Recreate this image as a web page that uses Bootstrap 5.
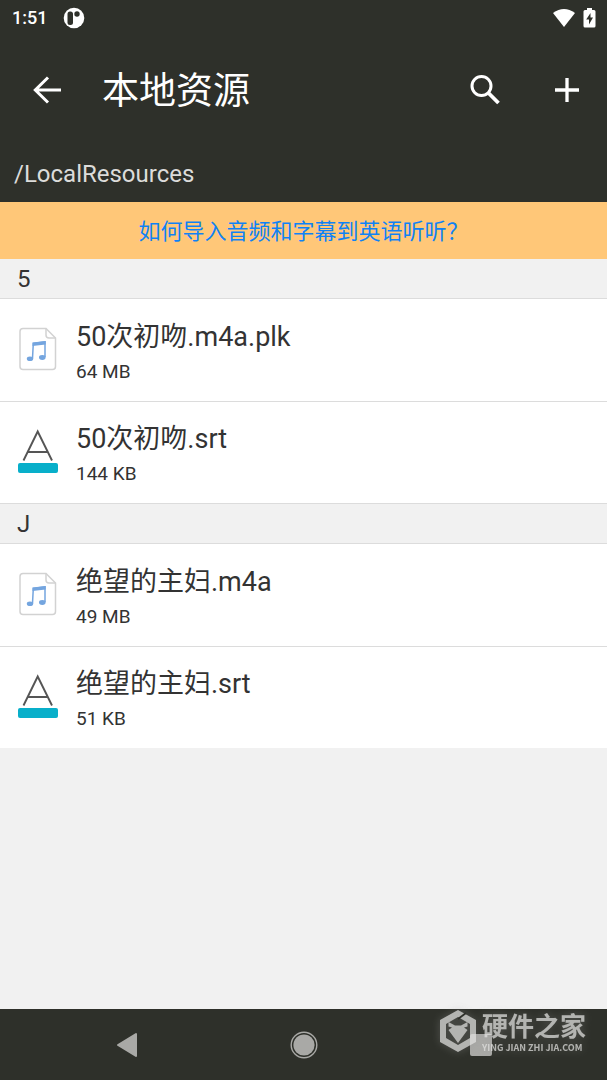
<!DOCTYPE html>
<html lang="zh-CN">
<head>
<meta charset="utf-8">
<meta name="viewport" content="width=device-width, initial-scale=1">
<title>本地资源</title>
<link href="https://cdn.jsdelivr.net/npm/bootstrap@5.3.0/dist/css/bootstrap.min.css" rel="stylesheet">
<style>
  :root { --dark: #2e302a; --page: #f1f1f1; --line: #dcdcdc; }
  body { font-family: Roboto, "Noto Sans CJK SC", sans-serif; background: var(--page); color: #333; }
  svg { display: block; flex: none; }
  .dark-area { background: var(--dark); color: #fff; }
  .status-bar { height: 36px; padding: 0 11px 0 12px; font-size: 18px; font-weight: 500; line-height: 38px; }
  .app-bar { height: 108px; padding: 0 17px 0 24px; }
  .app-bar h1 { font-size: 37px; line-height: 48px; font-weight: 400; margin: 0 0 0 32px; padding-top: 4px; }
  .icon-btn { width: 46px; height: 48px; padding: 0; border: 0; color: #fff; display: flex; align-items: center; justify-content: center; }
  .bar-actions { gap: 36px; }
  .path-bar { height: 58px; line-height: 60px; padding: 0 14px; font-size: 24px; color: #dcdcda; }
  .help-bar { line-height: 57px; padding-top: 1px; height: 57px; background: #ffc778; font-size: 22px; }
  .help-bar a { color: #0f82f5; text-decoration: none; }
  .group-title { font-size: 24px; line-height: 37px; padding: 2px 17px 0; margin: 0; font-weight: 400; background: var(--page); border-bottom: 1px solid var(--line); }
  .files + .group-title { border-top: 1px solid var(--line); }
  .file-item { height: 102px; padding: 0 17px 2px; gap: 17px; border: 0; background: #fff; color: #333; text-decoration: none; }
  .file-item + .file-item { border-top: 1px solid var(--line); }
  .file-text { padding-top: 7px; }
  .file-name { font-size: 27px; line-height: 38px; }
  .file-size { font-size: 19px; line-height: 32px; }
  .nav-keys { height: 71px; position: relative; }
  .key { flex: 1 1 0; height: 71px; border: 0; padding: 0; background: none; display: flex; align-items: center; justify-content: center; color: #a9a9a6; }
  .keys-row { padding: 0 38px; }
  .watermark { position: absolute; right: 21px; top: 0; gap: 5px; color: #e0e0de; opacity: .75; filter: drop-shadow(0 0 4px rgba(150,150,150,.5)); }
  .wm-name { font-size: 26px; line-height: 32px; font-weight: 700; padding-top: 2px; }
  .wm-site { font-family: "Noto Sans CJK SC", sans-serif; font-size: 9px; line-height: 10px; font-weight: 700; }
</style>
</head>
<body class="min-vh-100 d-flex flex-column">
<header class="dark-area">
  <div class="status-bar d-flex align-items-center">
    <span>1:51</span>
    <svg class="ms-3" width="22" height="22" viewBox="0 0 22 22"><circle cx="11" cy="11" r="10.3" fill="#fff"/><rect x="4.500" y="4.500" width="5.500" height="13.500" rx="2.500" fill="#2e302a"/><circle cx="14" cy="7" r="2.700" fill="#2e302a"/></svg>
    <svg class="ms-auto" width="22" height="20" viewBox="0 0 22 20"><path d="M0 5Q11-3 22 5L11 19z" fill="#fff"/></svg>
    <svg class="ms-2" width="13" height="20" viewBox="0 0 13 20"><path d="M4 0h5v2h2q1.500 0 1.500 1.500V18q0 1.500-1.500 1.500H2Q.5 19.500.5 18V3.500Q.5 2 2 2h2z" fill="#fff"/><path d="M7.500 5L3.200 11.500H6v5l4-7H7.500z" fill="#2e302a"/></svg>
  </div>
  <div class="app-bar d-flex align-items-center">
    <button class="btn icon-btn" type="button" aria-label="返回"><svg width="28" height="28" viewBox="0 0 28 28" fill="none" stroke="currentColor" stroke-width="3"><path d="M28 14H2.500M15 1.500L2.300 14 15 26.500"/></svg></button>
    <h1>本地资源</h1>
    <div class="bar-actions d-flex ms-auto">
      <button class="btn icon-btn" type="button" aria-label="搜索"><svg width="30" height="30" viewBox="0 0 30 30" fill="none" stroke="currentColor"><circle cx="11.500" cy="11" r="9.500" stroke-width="3"/><path d="M18.500 18L28.500 28" stroke-width="3.800"/></svg></button>
      <button class="btn icon-btn" type="button" aria-label="添加"><svg width="24" height="24" viewBox="0 0 24 24" stroke="currentColor" stroke-width="3.300"><path d="M12 0v24M0 12h24"/></svg></button>
    </div>
  </div>
  <div class="path-bar">/LocalResources</div>
</header>

<div class="help-bar text-center"><a href="#help">如何导入音频和字幕到英语听听？</a></div>

<main class="flex-grow-1">
  <svg class="d-none" aria-hidden="true">
    <symbol id="audio" viewBox="0 0 42 46">
      <path d="M6 2.500H29L38.500 12V40.500Q38.500 43.500 35.500 43.500H6Q3 43.500 3 40.500V5.500Q3 2.500 6 2.500z" fill="#fff" stroke="#d2d2d2" stroke-width="1.500"/>
      <path d="M29 2.500V9Q29 12 32 12H38.500" fill="none" stroke="#d2d2d2" stroke-width="1.500"/>
      <path d="M15.500 32.500L16.300 17.500L28 15.800V31" fill="none" stroke="#74a5df" stroke-width="1.500"/><path d="M15.500 16.500L28.700 15V18.500L15.500 20z" fill="#74a5df"/>
      <ellipse cx="13" cy="32.800" rx="3.200" ry="2.300" fill="#74a5df"/><ellipse cx="25.300" cy="31.500" rx="3.300" ry="2.400" fill="#74a5df"/>
    </symbol>
    <symbol id="subtitle" viewBox="0 0 42 46">
      <path d="M6.500 31.500L20.700 2.500L35 31.500M11 23H31" fill="none" stroke="#555" stroke-width="1.900"/>
      <rect x="1" y="34" width="40" height="10" rx="2" fill="#08afca"/>
    </symbol>
  </svg>

  <h2 class="group-title">5</h2>
  <div class="files list-group list-group-flush">
    <a href="#f1" class="file-item d-flex align-items-center">
      <svg width="42" height="46"><use href="#audio"/></svg>
      <div class="file-text"><div class="file-name">50次初吻.m4a.plk</div><div class="file-size">64 MB</div></div>
    </a>
    <a href="#f2" class="file-item d-flex align-items-center">
      <svg width="42" height="46"><use href="#subtitle"/></svg>
      <div class="file-text"><div class="file-name">50次初吻.srt</div><div class="file-size">144 KB</div></div>
    </a>
  </div>
  <h2 class="group-title">J</h2>
  <div class="files list-group list-group-flush">
    <a href="#f3" class="file-item d-flex align-items-center">
      <svg width="42" height="46"><use href="#audio"/></svg>
      <div class="file-text"><div class="file-name">绝望的主妇.m4a</div><div class="file-size">49 MB</div></div>
    </a>
    <a href="#f4" class="file-item d-flex align-items-center">
      <svg width="42" height="46"><use href="#subtitle"/></svg>
      <div class="file-text"><div class="file-name">绝望的主妇.srt</div><div class="file-size">51 KB</div></div>
    </a>
  </div>
</main>

<footer class="dark-area nav-keys">
  <div class="keys-row d-flex">
    <button class="key" type="button" aria-label="后退"><svg width="22" height="26" viewBox="0 0 22 26"><path d="M20 2V24L2 13z" fill="currentColor" stroke="currentColor" stroke-width="2" stroke-linejoin="round"/></svg></button>
    <button class="key" type="button" aria-label="主页"><svg width="28" height="28" viewBox="0 0 28 28"><circle cx="14" cy="14" r="12.800" fill="none" stroke="currentColor" stroke-width="1.400"/><circle cx="14" cy="14" r="10.600" fill="currentColor"/></svg></button>
    <button class="key" type="button" aria-label="最近任务"><svg width="22" height="22" viewBox="0 0 22 22"><rect width="22" height="22" rx="2" fill="currentColor"/></svg></button>
  </div>
  <div class="watermark d-flex align-items-center pe-none">
    <svg width="38" height="44" viewBox="0 0 38 44"><path d="M19 1L37 11V33L19 43L1 33V11zM19 8L7 15V29L19 36L31 29V15z" fill="currentColor" fill-rule="evenodd"/><path d="M9.500 13L16 16.500H22L28.500 13V17.500L25 18.500L28.500 21L19 34L9.500 21L13 18.500L9.500 17.500z" fill="currentColor"/><path d="M19 10L27 4" stroke="#2e302a" stroke-width="1.800"/></svg>
    <div><div class="wm-name">硬件之家</div><div class="wm-site">YING JIAN ZHI JIA.COM</div></div>
  </div>
</footer>
<script src="https://cdn.jsdelivr.net/npm/bootstrap@5.3.0/dist/js/bootstrap.bundle.min.js"></script>
</body>
</html>
